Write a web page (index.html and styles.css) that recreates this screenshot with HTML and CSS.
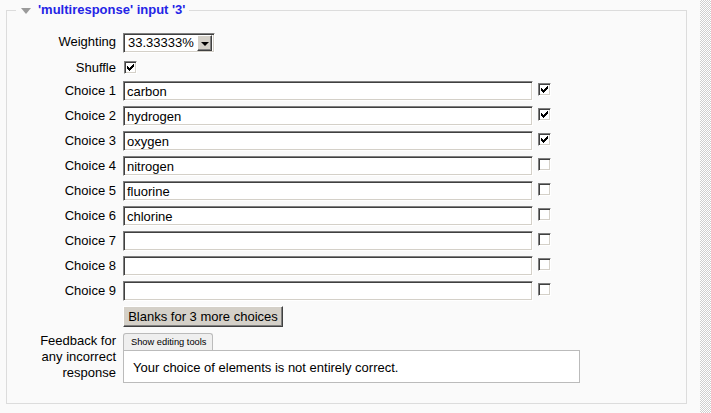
FILE: index.html
```html
<!DOCTYPE html>
<html>
<head>
<meta charset="utf-8">
<link rel="stylesheet" href="styles.css">
</head>
<body>
<div class="page">
  <fieldset class="box">
    <legend class="legend"><span class="tri"></span><span class="legend-text">'multiresponse' input '3'</span></legend>

    <div class="row row-weight">
      <div class="label">Weighting</div>
      <div class="select"><span class="select-val">33.33333%</span><span class="select-btn"><span class="arrow"></span></span></div>
    </div>

    <div class="row row-shuffle">
      <div class="label">Shuffle</div>
      <span class="cb checked"><svg viewBox="0 0 7 7" width="7" height="7" shape-rendering="crispEdges"><path d="M6 0h1v1h-1z M5 1h2v1h-2z M0 2h1v1h-1z M4 2h3v1h-3z M0 3h2v1h-2z M3 3h3v1h-3z M0 4h5v1h-5z M1 5h3v1h-3z M2 6h1v1h-1z" fill="#000"/></svg></span>
    </div>

    <div class="row row-choice">
      <div class="label">Choice 1</div>
      <div class="text">carbon</div>
      <span class="cb checked"><svg viewBox="0 0 7 7" width="7" height="7" shape-rendering="crispEdges"><path d="M6 0h1v1h-1z M5 1h2v1h-2z M0 2h1v1h-1z M4 2h3v1h-3z M0 3h2v1h-2z M3 3h3v1h-3z M0 4h5v1h-5z M1 5h3v1h-3z M2 6h1v1h-1z" fill="#000"/></svg></span>
    </div>
    <div class="row row-choice">
      <div class="label">Choice 2</div>
      <div class="text">hydrogen</div>
      <span class="cb checked"><svg viewBox="0 0 7 7" width="7" height="7" shape-rendering="crispEdges"><path d="M6 0h1v1h-1z M5 1h2v1h-2z M0 2h1v1h-1z M4 2h3v1h-3z M0 3h2v1h-2z M3 3h3v1h-3z M0 4h5v1h-5z M1 5h3v1h-3z M2 6h1v1h-1z" fill="#000"/></svg></span>
    </div>
    <div class="row row-choice">
      <div class="label">Choice 3</div>
      <div class="text">oxygen</div>
      <span class="cb checked"><svg viewBox="0 0 7 7" width="7" height="7" shape-rendering="crispEdges"><path d="M6 0h1v1h-1z M5 1h2v1h-2z M0 2h1v1h-1z M4 2h3v1h-3z M0 3h2v1h-2z M3 3h3v1h-3z M0 4h5v1h-5z M1 5h3v1h-3z M2 6h1v1h-1z" fill="#000"/></svg></span>
    </div>
    <div class="row row-choice">
      <div class="label">Choice 4</div>
      <div class="text">nitrogen</div>
      <span class="cb"></span>
    </div>
    <div class="row row-choice">
      <div class="label">Choice 5</div>
      <div class="text">fluorine</div>
      <span class="cb"></span>
    </div>
    <div class="row row-choice">
      <div class="label">Choice 6</div>
      <div class="text">chlorine</div>
      <span class="cb"></span>
    </div>
    <div class="row row-choice">
      <div class="label">Choice 7</div>
      <div class="text"></div>
      <span class="cb"></span>
    </div>
    <div class="row row-choice">
      <div class="label">Choice 8</div>
      <div class="text"></div>
      <span class="cb"></span>
    </div>
    <div class="row row-choice">
      <div class="label">Choice 9</div>
      <div class="text"></div>
      <span class="cb"></span>
    </div>

    <div class="row row-button">
      <div class="label"></div>
      <div class="button">Blanks for 3 more choices</div>
    </div>

    <div class="row row-feedback">
      <div class="label multi">Feedback for<br>any incorrect<br>response</div>
      <div class="editor">
        <div class="tab">Show editing tools</div>
        <div class="editor-box">Your choice of elements is not entirely correct.</div>
      </div>
    </div>
  </fieldset>
</div>
<div class="strip"></div>
</body>
</html>
```

FILE: styles.css
```css
html, body {
  margin: 0;
  padding: 0;
}
body {
  width: 711px;
  height: 413px;
  overflow: hidden;
  background: #fafafa;
  font-family: "Liberation Sans", Arial, sans-serif;
  font-size: 13px;
  color: #000;
  display: flex;
}
.page {
  width: 700px;
  flex: none;
}
.strip {
  width: 11px;
  flex: none;
  height: 413px;
  background-color: #fff;
  background-image: repeating-conic-gradient(#cfcfcf 0 25%, #ffffff 0 50%);
  background-size: 2px 2px;
}
.box {
  margin: 2px 0 0 6px;
  width: 681px;
  box-sizing: border-box;
  border: 1px solid #dcdcdc;
  padding: 0 0 20px 0;
  min-inline-size: 0;
}
.legend {
  margin-left: 9px;
  padding: 0 4px 0 5px;
  line-height: 16px;
  height: 16px;
  display: flex;
  align-items: center;
}
.tri {
  width: 0;
  height: 0;
  border-left: 5px solid transparent;
  border-right: 5px solid transparent;
  border-top: 6px solid #9a9a9a;
  margin-right: 7px;
  margin-top: 1px;
}
.legend-text {
  font-weight: bold;
  color: #2424e6;
  font-size: 13px;
}
.row {
  display: flex;
  align-items: center;
}
.label {
  width: 109px;
  flex: none;
  text-align: right;
  margin-right: 7px;
  white-space: nowrap;
}
.row-weight {
  margin-top: 15px;
  height: 20px;
}
.row-weight .label {
  align-self: flex-start;
  line-height: 18px;
}
.row-shuffle {
  height: 28px;
}
.row-shuffle .cb {
  margin-left: 1px;
}
.row-choice {
  height: 25px;
  align-items: flex-start;
}
.row-choice .label {
  line-height: 20px;
}
.row-choice .cb {
  margin-top: 2px;
  margin-left: 5px;
}
.select {
  width: 92px;
  height: 20px;
  box-sizing: border-box;
  background: #fff;
  border: 1px solid;
  border-color: #808080 #ffffff #ffffff #808080;
  box-shadow: inset 1px 1px 0 #404040, inset -1px -1px 0 #d4d0c8;
  display: flex;
  align-items: center;
  justify-content: space-between;
  padding: 2px 2px 2px 4px;
}
.select-val {
  line-height: 16px;
}
.select-btn {
  width: 15px;
  height: 16px;
  box-sizing: border-box;
  background: #d4d0c8;
  border: 1px solid;
  border-color: #ffffff #404040 #404040 #ffffff;
  box-shadow: inset -1px -1px 0 #808080;
  display: flex;
  align-items: center;
  justify-content: center;
}
.arrow {
  width: 0;
  height: 0;
  border-left: 4px solid transparent;
  border-right: 4px solid transparent;
  border-top: 4px solid #000;
  margin-top: 1px;
}
.cb {
  width: 13px;
  height: 13px;
  box-sizing: border-box;
  flex: none;
  background: #fff;
  border: 1px solid;
  border-color: #808080 #ffffff #ffffff #808080;
  box-shadow: inset 1px 1px 0 #404040, inset -1px -1px 0 #d4d0c8;
  position: relative;
}
.cb svg {
  display: block;
  margin: 2px 0 0 2px;
}
.text {
  width: 410px;
  height: 20px;
  flex: none;
  box-sizing: border-box;
  background: #fff;
  border: 1px solid;
  border-color: #808080 #ffffff #ffffff #808080;
  box-shadow: inset 1px 1px 0 #404040, inset -1px -1px 0 #d4d0c8;
  padding: 2px 3px 0 3px;
  line-height: 16px;
}
.row-button {
  height: 21px;
}
.button {
  width: 160px;
  height: 21px;
  box-sizing: border-box;
  background: #d4d0c8;
  border: 1px solid;
  border-color: #ffffff #404040 #404040 #ffffff;
  box-shadow: inset -1px -1px 0 #808080;
  text-align: center;
  line-height: 19px;
}
.row-feedback {
  margin-top: 6px;
  align-items: flex-start;
}
.label.multi {
  line-height: 16px;
  white-space: normal;
}
.editor {
  display: flex;
  flex-direction: column;
  align-items: flex-start;
}
.tab {
  height: 17px;
  box-sizing: border-box;
  border: 1px solid #bbbbbb;
  border-bottom: none;
  border-radius: 3px 3px 0 0;
  background: #efefef;
  font-size: 9.3px;
  line-height: 16px;
  padding: 0 6px 0 7px;
}
.editor-box {
  width: 457px;
  height: 33px;
  box-sizing: border-box;
  border: 1px solid #bbbbbb;
  background: #fff;
  padding: 2px 9px 0 9px;
  line-height: 29px;
}
```
